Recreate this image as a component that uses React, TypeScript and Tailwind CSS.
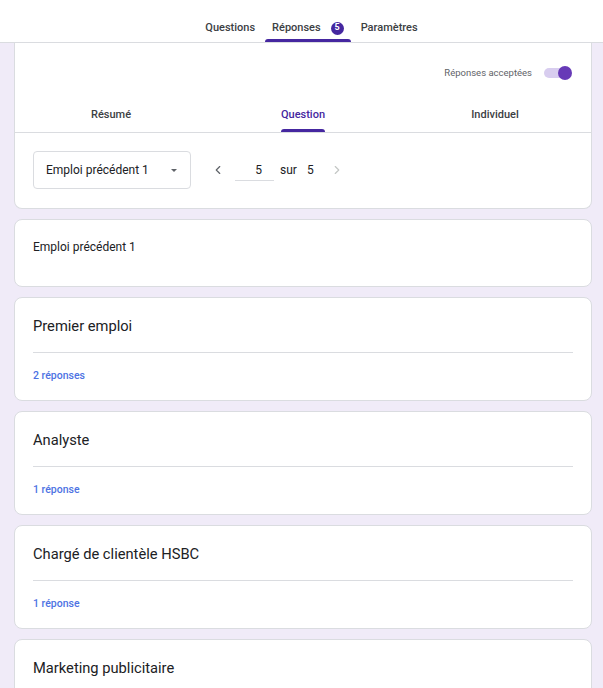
import { ChevronLeft, ChevronRight } from "lucide-react";

const font = { fontFamily: "Roboto, 'Liberation Sans', sans-serif" };

const questions = [
  { title: "Premier emploi", count: "2 réponses" },
  { title: "Analyste", count: "1 réponse" },
  { title: "Chargé de clientèle HSBC", count: "1 réponse" },
  { title: "Marketing publicitaire", count: "1 réponse" },
];

function TopTabs() {
  const tabs = ["Questions", "Réponses", "Paramètres"];
  return (
    <header className="bg-white border-b border-[#dadce0] h-[43px] flex justify-center items-end">
      <nav className="flex items-end ml-[20px] gap-[3px]">
        {tabs.map((t) => {
          const active = t === "Réponses";
          return (
            <div key={t} className="flex flex-col items-center">
              <div className="flex items-center h-[20px] px-[7px] gap-[10px] text-[11px] font-medium text-[#3c4043]">
                <span>{t}</span>
                {active && (
                  <span className="w-[13px] h-[13px] rounded-full bg-[#4527a0] text-white text-[9px] font-bold flex items-center justify-center">
                    5
                  </span>
                )}
              </div>
              <div className={"h-[3px] w-full rounded-t-[3px] mt-[1px] " + (active ? "bg-[#4527a0]" : "bg-transparent")} />
            </div>
          );
        })}
      </nav>
    </header>
  );
}

function SummaryCard() {
  const tabs = ["Résumé", "Question", "Individuel"];
  return (
    <section className="bg-white border border-t-0 border-[#dadce0] rounded-b-[8px]">
      <div className="h-[55px] pt-[23px] pr-[19px] flex justify-end items-start gap-[12px]">
        <span className="text-[9.5px] text-[#5f6368] leading-[14px]">Réponses acceptées</span>
        <div className="relative w-[28px] h-[14px] flex items-center">
          <div className="w-[24px] h-[10px] rounded-full bg-[#d8cdef]" />
          <div className="absolute right-0 w-[14px] h-[14px] rounded-full bg-[#673ab7]" />
        </div>
      </div>
      <div className="grid grid-cols-3 border-b border-[#dadce0]">
        {tabs.map((t) => {
          const active = t === "Question";
          return (
            <div key={t} className="flex justify-center">
              <div className="flex flex-col items-center">
                <span className={"text-[11px] font-medium leading-[16px] mt-[9px] " + (active ? "text-[#4527a0]" : "text-[#3c4043]")}>
                  {t}
                </span>
                <div className={"h-[3px] w-full rounded-t-[3px] mt-[6px] " + (active ? "bg-[#4527a0]" : "bg-transparent")} />
              </div>
            </div>
          );
        })}
      </div>
      <div className="flex items-center px-[18px] pt-[18px] pb-[19px]">
        <div className="w-[158px] h-[38px] border border-[#dadce0] rounded-[4px] flex items-center justify-between pl-[12px] pr-[13px]">
          <span className="text-[12px] text-[#202124]">Emploi précédent 1</span>
          <span className="w-0 h-0 border-l-[3.5px] border-r-[3.5px] border-t-[3.5px] border-l-transparent border-r-transparent border-t-[#5f6368]" />
        </div>
        <div className="flex items-center ml-[20px]">
          <ChevronLeft size={14} strokeWidth={2} className="text-[#5f6368]" />
          <div className="w-[39px] h-[22px] ml-[10px] border-b border-[#dadce0] flex items-center justify-end pr-[12px] text-[12px] text-[#202124]">
            5
          </div>
          <span className="ml-[6px] text-[12px] text-[#202124]">sur</span>
          <span className="ml-[10px] text-[12px] text-[#202124]">5</span>
          <ChevronRight size={14} strokeWidth={2} className="ml-[16px] text-[#c4c7c5]" />
        </div>
      </div>
    </section>
  );
}

export default function App() {
  return (
    <main className="min-h-screen bg-[#f0ebf8]" style={font}>
      <TopTabs />
      <div className="pl-[14px] pr-[11px] pb-[10px] flex flex-col gap-[10px]">
        <SummaryCard />
        <section className="bg-white border border-[#dadce0] rounded-[8px] h-[68px] px-[18px] pt-[14px]">
          <span className="text-[12px] leading-[18px] text-[#202124]">Emploi précédent 1</span>
        </section>
        {questions.map((q) => (
          <section key={q.title} className="bg-white border border-[#dadce0] rounded-[8px] px-[18px] pt-[17px] pb-[16px]">
            <h2 className="text-[14.7px] leading-[22px] text-[#202124]">{q.title}</h2>
            <div className="h-px bg-[#dadce0] mt-[15px]" />
            <p className="mt-[15px] text-[10.5px] leading-[16px] font-medium text-[#4d72e3]">{q.count}</p>
          </section>
        ))}
      </div>
    </main>
  );
}
